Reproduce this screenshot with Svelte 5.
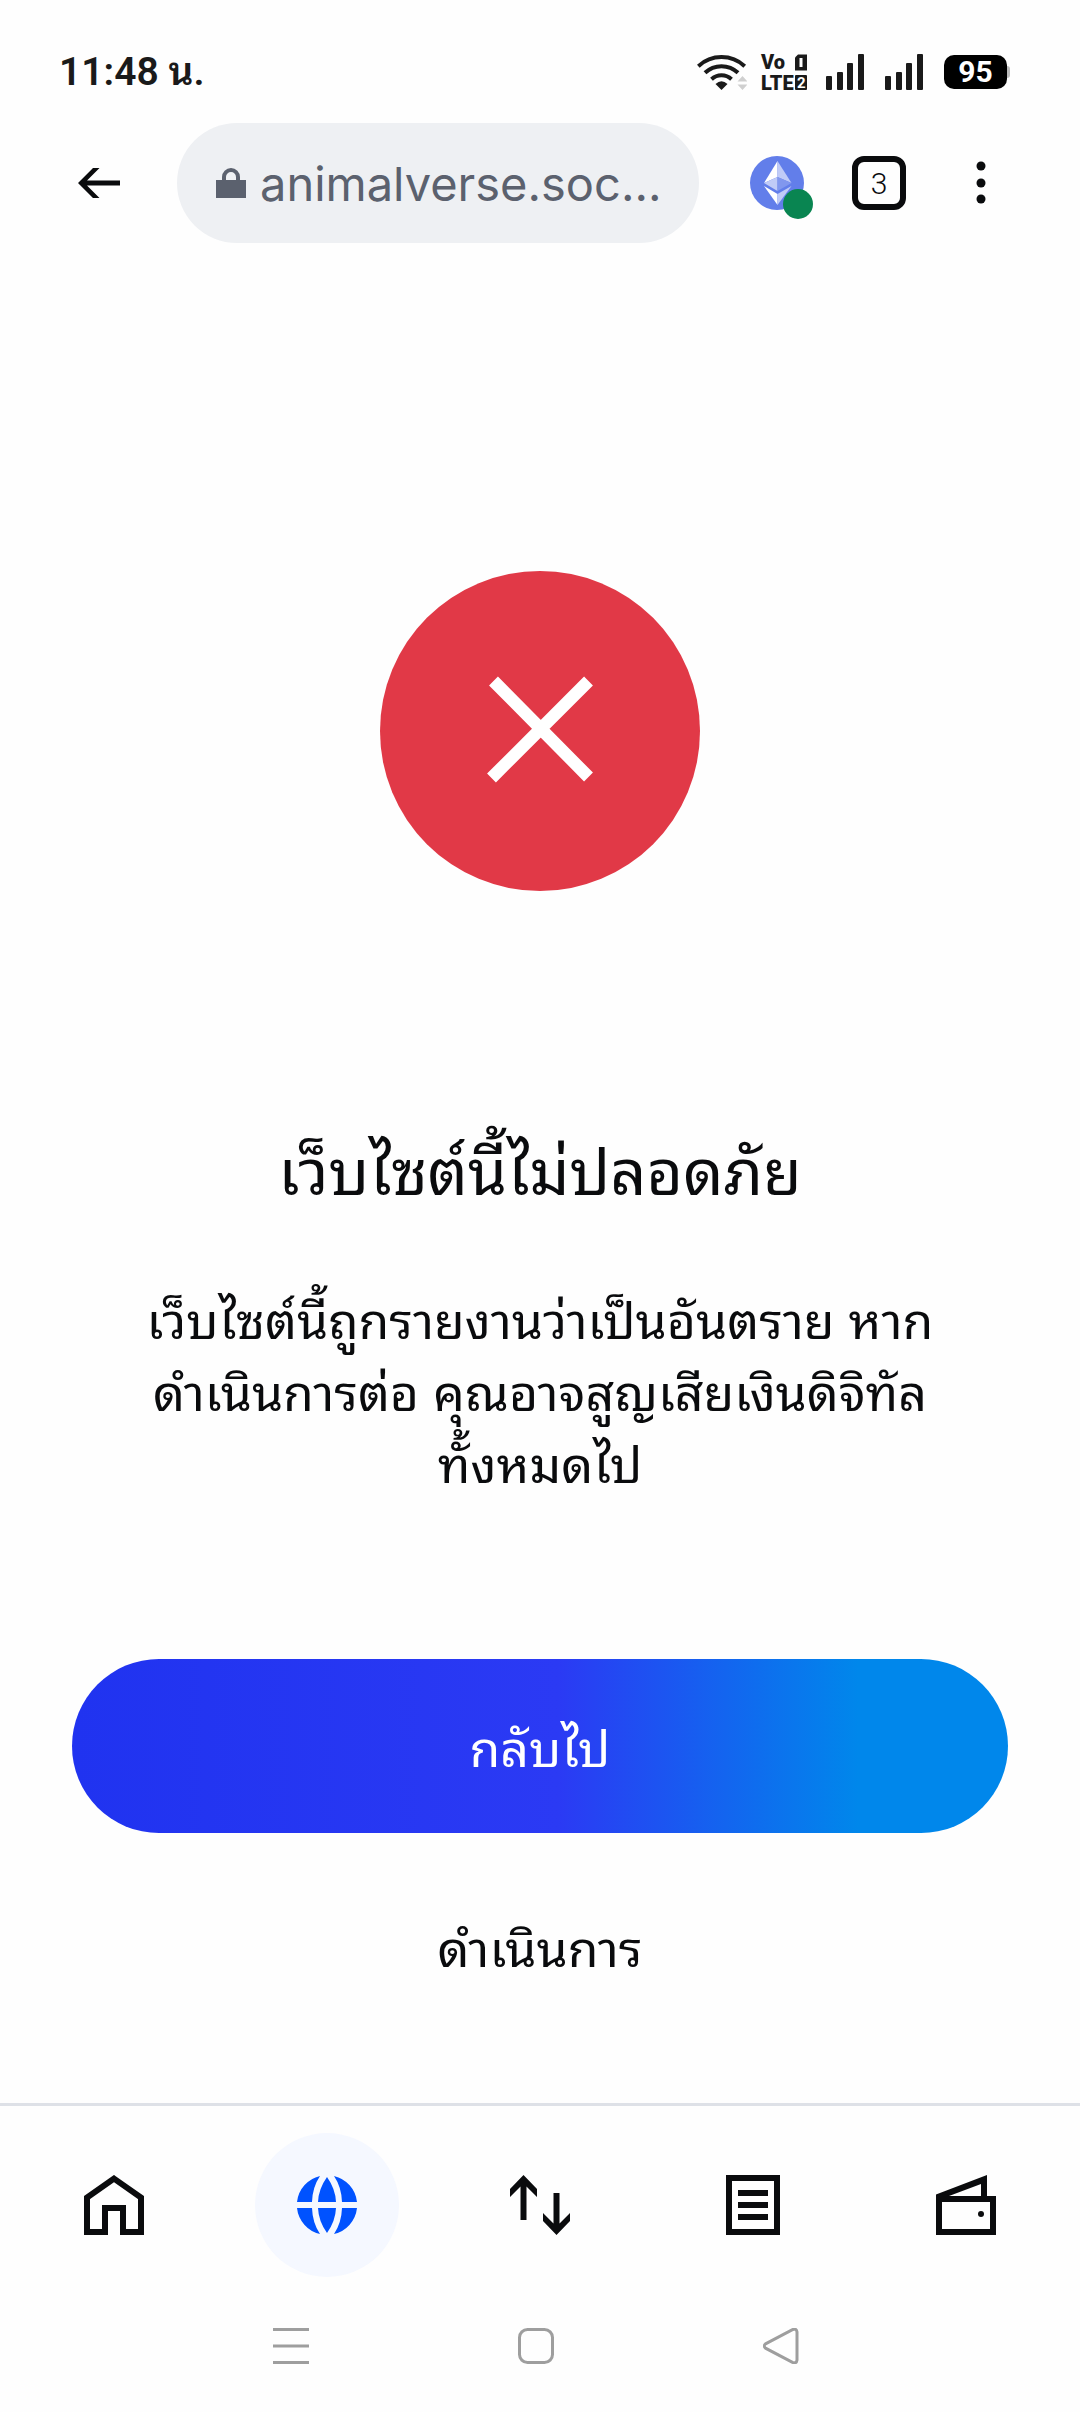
<script>
  const bars = [14, 18, 27, 36];
</script>

<div class="screen">
  <div class="status">
    <span class="time">11:48 น.</span>
    <div class="indicators">
      <svg class="wifi" viewBox="0 0 50 36" width="50" height="36" aria-hidden="true">
        <g fill="none" stroke="#1a1a1a" stroke-width="4">
          <path d="M1.300 12.200A34 34 0 0 1 47.700 12.200" />
          <path d="M8 18.800A24 24 0 0 1 41 18.800" />
          <path d="M14.500 25.200A14.500 14.500 0 0 1 34.500 25.200" />
        </g>
        <path d="M18.500 30Q24.500 24.500 30.500 30L24.500 36Z" fill="#1a1a1a" />
        <path d="M45.500 22l5 5.500h-10zM45.500 36l5-5.500h-10z" fill="#cfcfcf" />
      </svg>
      <svg class="volte" viewBox="-2 -6 50 48" width="50" height="48" role="img" aria-label="VoLTE">
        <text class="lte" x="0" y="15">Vo</text>
        <text class="lte" x="0" y="36">LTE</text>
        <path d="M37 0.500h9v16H34v-13z" fill="#1a1a1a" />
        <path d="M38.500 4h3v9h-3z" fill="#fff" />
        <rect x="34" y="21" width="12" height="15" rx="1" fill="#1a1a1a" />
        <text class="sim" x="36" y="34">2</text>
      </svg>
      {#each [1, 2] as sim (sim)}
        <svg class="signal" viewBox="0 0 38 36" width="38" height="36" role="img" aria-label="SIM {sim}">
          {#each bars as h, i}
            <rect x={i * 11 - (i > 1 ? 1 : 0)} y={36 - h} width="6" height={h} rx="1" fill="#1a1a1a" />
          {/each}
        </svg>
      {/each}
      <div class="battery"><span class="level">95</span><span class="tip"></span></div>
    </div>
  </div>

  <header class="toolbar">
    <button class="back" aria-label="Back">
      <svg viewBox="0 0 42 30" width="42" height="30">
        <path d="M0 15L15 0h6.500L9 12.500h33v5H9L21.500 30H15z" fill="#0a0b0d" />
      </svg>
    </button>
    <button class="address">
      <svg viewBox="0 0 30 30" width="30" height="30" aria-hidden="true">
        <path d="M8 13V9a7 7 0 0 1 14 0v4" fill="none" stroke="#5b616e" stroke-width="4" />
        <path d="M0 12h30v18H0z" fill="#5b616e" />
      </svg>
      <span>animalverse.soc...</span>
    </button>
    <button class="network" aria-label="Ethereum">
      <svg viewBox="0 0 54 54" width="54" height="54">
        <circle cx="27" cy="27" r="27" fill="#627eea" />
        <path d="M27.500 5L14 27l13.500-6z" fill="#fff" />
        <path d="M27.500 5L41.500 27l-14-6z" fill="#c0cbf7" />
        <path d="M14 27l13.500-6v14z" fill="#c0cbf7" />
        <path d="M41.500 27l-14-6v14z" fill="#8197ee" />
        <path d="M14 30l13.500 8v11z" fill="#fff" />
        <path d="M41.500 30l-14 8v11z" fill="#c0cbf7" />
      </svg>
      <span class="online"></span>
    </button>
    <button class="tabs" aria-label="3 tabs">3</button>
    <button class="more" aria-label="More">
      <svg viewBox="0 0 10 44" width="10" height="44">
        <circle cx="5" cy="5" r="4.500" /><circle cx="5" cy="22" r="4.500" /><circle cx="5" cy="38" r="4.500" />
      </svg>
    </button>
  </header>

  <main>
    <svg class="alert" viewBox="0 0 320 320" width="320" height="320" aria-hidden="true">
      <circle cx="160" cy="160" r="160" fill="#e13947" />
      <path d="M113.500 110L208.500 206M208.500 110L111.500 207" stroke="#fff" stroke-width="12.500" />
    </svg>
    <h1>เว็บไซต์นี้ไม่ปลอดภัย</h1>
    <p>เว็บไซต์นี้ถูกรายงานว่าเป็นอันตราย หาก<br />ดำเนินการต่อ คุณอาจสูญเสียเงินดิจิทัล<br />ทั้งหมดไป</p>
    <div class="actions">
      <button class="primary">กลับไป</button>
      <button class="secondary">ดำเนินการ</button>
    </div>
  </main>

  <nav class="nav">
    <a href="#home" aria-label="Home">
      <svg viewBox="0 0 60 60" width="60" height="60">
        <path d="M30 3.600L57 22.500V57H39V33H21V57H3V22.500z" fill="none" stroke="#0a0b0d" stroke-width="6" />
      </svg>
    </a>
    <a href="#browser" class="active" aria-label="Browser">
      <svg viewBox="0 0 60 60" width="60" height="60" fill="#0052ff">
        <path d="M23 1Q15.500 12 15 27H0A30 30 0 0 1 23 1zM37 1Q44.500 12 45 27H60A30 30 0 0 0 37 1zM23 59Q15.500 48 15 33H0A30 30 0 0 0 23 59zM37 59Q44.500 48 45 33H60A30 30 0 0 1 37 59z" />
        <path d="M30 2Q38.500 14 39 27H21Q21.500 14 30 2zM30 58Q38.500 46 39 33H21Q21.500 46 30 58z" />
      </svg>
    </a>
    <a href="#trade" aria-label="Trade">
      <svg viewBox="0 0 60 60" width="60" height="60" fill="#0a0b0d">
        <path d="M13.500 0L27 14v8L16.500 11.500V45h-6V11.500L0 22v-8zM46.500 60L60 46v-8L49.500 48.500V18h-6V48.500L33 38v8z" />
      </svg>
    </a>
    <a href="#activity" aria-label="Activity">
      <svg viewBox="0 0 60 60" width="60" height="60" fill="none" stroke="#0a0b0d" stroke-width="6">
        <path d="M6 3H54V57H6zM15 18H45M15 30H45M15 42H45" />
      </svg>
    </a>
    <a href="#wallet" aria-label="Wallet">
      <svg viewBox="0 0 60 60" width="60" height="60">
        <path d="M0 19.500L51 0V21H60V60H0zM13 21H45V9zM6 27V54H54V27z" fill="#0a0b0d" fill-rule="evenodd" />
        <circle cx="45" cy="39" r="3" fill="#0a0b0d" />
      </svg>
    </a>
  </nav>

  <div class="system">
    <button aria-label="Recent apps">
      <svg viewBox="0 0 36 36" width="36" height="36"><path d="M0 1.500H36M0 18H36M0 34.500H36" /></svg>
    </button>
    <button aria-label="Home screen">
      <svg viewBox="0 0 36 36" width="36" height="36"><rect x="1.500" y="1.500" width="33" height="33" rx="8" /></svg>
    </button>
    <button aria-label="Go back">
      <svg viewBox="0 0 36 36" width="36" height="36"><path d="M2.500 15.800L29.500 1.600Q33.500 0 34 4V32Q33.500 36 29.500 34.400L2.500 20.200Q0 18 2.500 15.800z" /></svg>
    </button>
  </div>
</div>

<style>
  :global(body) {
    background: #fefefe;
  }
  .screen {
    min-height: 100vh;
    box-sizing: border-box;
    display: flex;
    flex-direction: column;
    color: #0a0b0d;
    font-family: Inter, "Noto Sans Thai Looped", "Droid Sans Thai", Loma, Waree, Garuda, sans-serif;
  }
  button {
    border: 0;
    padding: 0;
    background: none;
    color: inherit;
    font: inherit;
    cursor: pointer;
  }
  svg {
    display: block;
    flex: none;
  }
  .status {
    display: flex;
    justify-content: space-between;
    align-items: center;
    height: 48px;
    padding: 48px 70px 0 59px;
    color: #1a1a1a;
    font-family: Roboto, "Noto Sans Thai Looped", "Droid Sans Thai", Loma, Waree, Garuda, sans-serif;
  }
  .time {
    font-size: 39px;
    line-height: 48px;
    font-weight: 600;
  }
  .indicators {
    display: flex;
    align-items: center;
  }
  .wifi {
    margin-right: 12px;
  }
  .volte {
    margin-right: 17px;
  }
  .signal {
    margin-right: 21px;
  }
  .lte {
    font: 900 20px Roboto, sans-serif;
    fill: #1a1a1a;
  }
  .sim {
    font: 700 15px Roboto, sans-serif;
    fill: #fff;
  }
  .battery {
    display: flex;
    align-items: center;
  }
  .level {
    width: 63px;
    border-radius: 10px;
    background: #000;
    color: #fff;
    font-size: 30px;
    line-height: 34px;
    font-weight: 700;
    text-align: center;
  }
  .tip {
    width: 3px;
    height: 12px;
    border-radius: 0 3px 3px 0;
    background: #bbb;
  }
  .toolbar {
    display: flex;
    align-items: center;
    padding: 27px 72px 0 78px;
  }
  .address {
    flex: 1;
    min-width: 0;
    display: flex;
    align-items: center;
    gap: 14px;
    height: 120px;
    margin: 0 51px 0 57px;
    padding: 0 24px 0 39px;
    border-radius: 60px;
    background: #eef0f3;
    color: #5b616e;
    font-size: 47px;
    white-space: nowrap;
  }
  .network {
    position: relative;
    flex: none;
    margin-right: 48px;
  }
  .online {
    position: absolute;
    right: -9px;
    bottom: -9px;
    width: 30px;
    height: 30px;
    border-radius: 50%;
    background: #098551;
  }
  .tabs {
    flex: none;
    box-sizing: border-box;
    width: 54px;
    height: 54px;
    margin-right: 48px;
    border: 6px solid #0a0b0d;
    border-radius: 12px;
    font: 300 30px Roboto, sans-serif;
  }
  .more {
    flex: none;
    display: flex;
    justify-content: center;
    width: 54px;
    fill: #0a0b0d;
  }
  main {
    flex: 1;
    display: flex;
    flex-direction: column;
    align-items: center;
    padding: 328px 72px 0;
    text-align: center;
  }
  h1 {
    margin: 236px 0 0;
    font-size: 63px;
    line-height: 90px;
    font-weight: 400;
  }
  p {
    margin: 68px 0 0;
    font-size: 50px;
    line-height: 72px;
  }
  .actions {
    align-self: stretch;
    display: flex;
    flex-direction: column;
    gap: 30px;
    margin-top: 158px;
    font-size: 50px;
  }
  .primary {
    height: 174px;
    padding-bottom: 4px;
    border-radius: 87px;
    background: linear-gradient(90deg, #2033f0 0%, #2b3af4 52%, #0087eb 84%);
    color: #fff;
  }
  .secondary {
    height: 162px;
  }
  .nav {
    display: flex;
    justify-content: space-between;
    padding: 27px 42px;
    border-top: 3px solid #dee1e7;
  }
  .nav a {
    display: flex;
    align-items: center;
    justify-content: center;
    width: 144px;
    height: 144px;
    border-radius: 50%;
  }
  .nav .active {
    background: #f5f8ff;
  }
  .system {
    display: flex;
    justify-content: center;
    gap: 209px;
    padding: 24px 8px 48px 0;
  }
  .system svg {
    fill: none;
    stroke: #9e9e9e;
    stroke-width: 3;
  }
</style>
